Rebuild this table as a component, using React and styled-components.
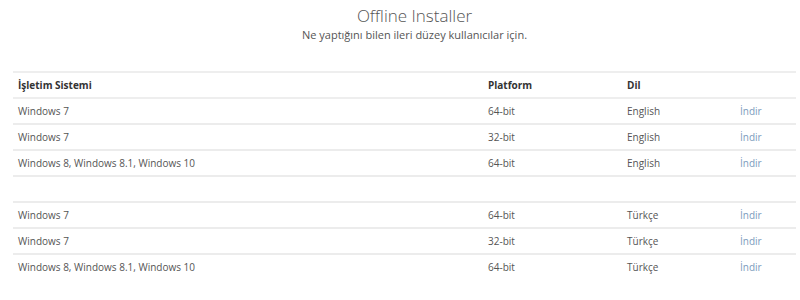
import React from "react";
import styled, { createGlobalStyle } from "styled-components";

const Global = createGlobalStyle`
  html, body { margin: 0; padding: 0; background: #fff; }
  body { font-family: "Open Sans", "Noto Sans", sans-serif; color: #555; }
`;

const Page = styled.div`
  width: 800px;
  padding: 0 4px 0 13px;
  box-sizing: border-box;
`;

const Header = styled.header`
  text-align: center;
  padding: 5px 0 0 20px;
  margin-bottom: 28px;
`;

const Title = styled.h2`
  margin: 0;
  font-size: 17px;
  font-weight: 300;
  line-height: 22px;
  color: #555;
`;

const Subtitle = styled.p`
  margin: 0;
  font-size: 11px;
  line-height: 16px;
  color: #555;
`;

const Table = styled.table`
  width: 100%;
  table-layout: fixed;
  border-collapse: collapse;
  font-size: 10px;
  border-top: 2px solid #eee;
`;

const Th = styled.th`
  box-sizing: border-box;
  text-align: left;
  font-weight: 700;
  color: #333;
  height: 26px;
  padding: 0 5px;
  border-bottom: 2px solid #eee;
  width: ${(p) => p.$w || "auto"};
`;

const Td = styled.td`
  height: 24px;
  padding: 0 5px;
  border-top: 2px solid #ececec;
  color: #555;
`;

const Link = styled.a`
  color: #7b9bbd;
  text-decoration: none;
`;

const rows = [
  ["Windows 7", "64-bit", "English"],
  ["Windows 7", "32-bit", "English"],
  ["Windows 8, Windows 8.1, Windows 10", "64-bit", "English"],
  null,
  ["Windows 7", "64-bit", "Türkçe"],
  ["Windows 7", "32-bit", "Türkçe"],
  ["Windows 8, Windows 8.1, Windows 10", "64-bit", "Türkçe"],
];

export default function App() {
  return (
    <Page>
      <Global />
      <Header>
        <Title>Offline Installer</Title>
        <Subtitle>Ne yaptığını bilen ileri düzey kullanıcılar için.</Subtitle>
      </Header>
      <Table>
        <thead>
          <tr>
            <Th $w="470px">İşletim Sistemi</Th>
            <Th $w="139px">Platform</Th>
            <Th $w="113px">Dil</Th>
            <Th></Th>
          </tr>
        </thead>
        <tbody>
          {rows.map((r, i) =>
            r ? (
              <tr key={i}>
                <Td>{r[0]}</Td>
                <Td>{r[1]}</Td>
                <Td>{r[2]}</Td>
                <Td>
                  <Link href="#">İndir</Link>
                </Td>
              </tr>
            ) : (
              <tr key={i}>
                <Td colSpan={4}></Td>
              </tr>
            )
          )}
        </tbody>
      </Table>
    </Page>
  );
}
